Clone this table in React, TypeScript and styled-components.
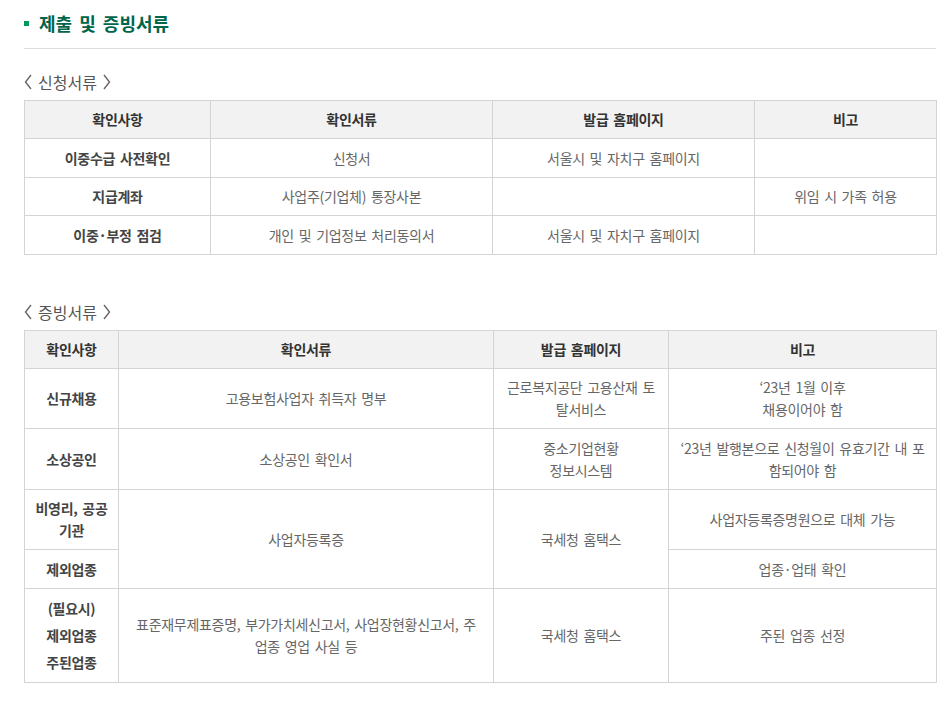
import React, { FC } from 'react'
import styled, { createGlobalStyle } from 'styled-components'

const GlobalStyle = createGlobalStyle`
  body {
    margin: 0;
    background: #fff;
    font-family: 'Noto Sans CJK KR', 'Noto Sans', sans-serif;
  }
`

const Page = styled.div`
  padding: 8px 16px 20px 24px;
`

const Title = styled.h2`
  display: flex;
  align-items: center;
  gap: 10px;
  margin: 0;
  padding-bottom: 10px;
  border-bottom: 1px solid #dddddd;
  color: #00654a;
  font-size: 18px;
  font-weight: 700;
  line-height: 30px;
  word-spacing: 3px;

  &::before {
    content: '';
    width: 5px;
    height: 5px;
    background: #00985a;
  }
`

const SubTitle = styled.h3`
  display: flex;
  align-items: center;
  gap: 6px;
  margin: 22px 0 7px;
  color: #555;
  font-size: 16px;
  font-weight: 400;
  line-height: 22px;

  svg {
    flex: none;
  }
`

const Section = styled.section`
  & + & {
    margin-top: 46px;
  }
`

const Table = styled.table`
  width: 100%;
  border-collapse: collapse;
  table-layout: fixed;
  border: 1px solid #d4d4d4;
  font-size: 14px;
  letter-spacing: -0.3px;
  word-spacing: 2px;
`

const Th = styled.th`
  background: #f2f2f2;
  border: 1px solid #d4d4d4;
  padding: 8px 2px;
  color: #333;
  font-weight: 700;
  line-height: 21px;
  text-align: center;
`

const Td = styled.td<{ $head?: boolean; $loose?: boolean }>`
  border: 1px solid #d4d4d4;
  padding: ${({ $loose }) => ($loose ? '6px 2px' : '7.75px 2px')};
  color: ${({ $head }) => ($head ? '#444' : '#666')};
  font-weight: ${({ $head }) => ($head ? 700 : 400)};
  line-height: ${({ $loose }) => ($loose ? '27px' : '22px')};
  text-align: center;
  vertical-align: middle;
  white-space: nowrap;
`

const Chevron: FC<{ right?: boolean }> = ({ right }) => (
  <svg width="8" height="16" viewBox="0 0 8 16">
    <polyline
      points={right ? '1,1 6.5,8 1,15' : '7,1 1.5,8 7,15'}
      fill="none"
      stroke="#666"
      strokeWidth="1.4"
    />
  </svg>
)

const Heading: FC<{ children: React.ReactNode }> = ({ children }) => (
  <SubTitle>
    <Chevron />
    {children}
    <Chevron right />
  </SubTitle>
)

export default function App() {
  return (
    <Page>
      <GlobalStyle />
      <Title>제출 및 증빙서류</Title>

      <Section>
        <Heading>신청서류</Heading>
        <Table>
          <colgroup>
            <col style={{ width: 186 }} />
            <col style={{ width: 282 }} />
            <col style={{ width: 262 }} />
            <col style={{ width: 182 }} />
          </colgroup>
          <thead>
            <tr>
              <Th>확인사항</Th>
              <Th>확인서류</Th>
              <Th>발급 홈페이지</Th>
              <Th>비고</Th>
            </tr>
          </thead>
          <tbody>
            <tr>
              <Td $head>이중수급 사전확인</Td>
              <Td>신청서</Td>
              <Td>서울시 및 자치구 홈페이지</Td>
              <Td />
            </tr>
            <tr>
              <Td $head>지급계좌</Td>
              <Td>사업주(기업체) 통장사본</Td>
              <Td />
              <Td>위임 시 가족 허용</Td>
            </tr>
            <tr>
              <Td $head>이중·부정 점검</Td>
              <Td>개인 및 기업정보 처리동의서</Td>
              <Td>서울시 및 자치구 홈페이지</Td>
              <Td />
            </tr>
          </tbody>
        </Table>
      </Section>

      <Section>
        <Heading>증빙서류</Heading>
        <Table>
          <colgroup>
            <col style={{ width: 94 }} />
            <col style={{ width: 375 }} />
            <col style={{ width: 175 }} />
            <col style={{ width: 268 }} />
          </colgroup>
          <thead>
            <tr>
              <Th>확인사항</Th>
              <Th>확인서류</Th>
              <Th>발급 홈페이지</Th>
              <Th>비고</Th>
            </tr>
          </thead>
          <tbody>
            <tr>
              <Td $head>신규채용</Td>
              <Td>고용보험사업자 취득자 명부</Td>
              <Td>
                근로복지공단 고용산재 토
                <br />
                탈서비스
              </Td>
              <Td>
                ‘23년 1월 이후
                <br />
                채용이어야 함
              </Td>
            </tr>
            <tr>
              <Td $head>소상공인</Td>
              <Td>소상공인 확인서</Td>
              <Td>
                중소기업현황
                <br />
                정보시스템
              </Td>
              <Td>
                ‘23년 발행본으로 신청월이 유효기간 내 포
                <br />
                함되어야 함
              </Td>
            </tr>
            <tr>
              <Td $head>
                비영리, 공공
                <br />
                기관
              </Td>
              <Td rowSpan={2}>사업자등록증</Td>
              <Td rowSpan={2}>국세청 홈택스</Td>
              <Td>사업자등록증명원으로 대체 가능</Td>
            </tr>
            <tr>
              <Td $head>제외업종</Td>
              <Td>업종·업태 확인</Td>
            </tr>
            <tr>
              <Td $head $loose>
                (필요시)
                <br />
                제외업종
                <br />
                주된업종
              </Td>
              <Td>
                표준재무제표증명, 부가가치세신고서, 사업장현황신고서, 주
                <br />
                업종 영업 사실 등
              </Td>
              <Td>국세청 홈택스</Td>
              <Td>주된 업종 선정</Td>
            </tr>
          </tbody>
        </Table>
      </Section>
    </Page>
  )
}
